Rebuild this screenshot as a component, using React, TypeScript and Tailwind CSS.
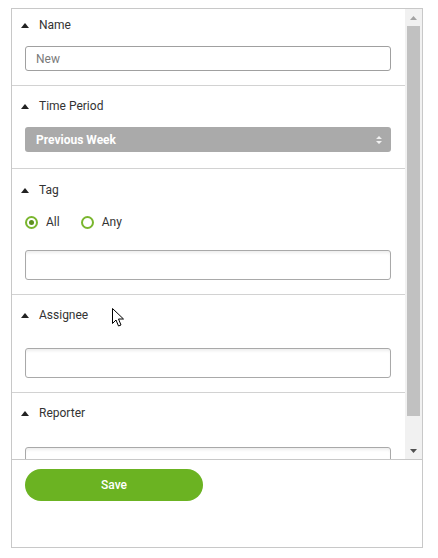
import type { ReactNode } from "react";

function Caret() {
    return (
        <svg width="8" height="5" viewBox="0 0 8 5" className="mr-[10px] ml-[9px] shrink-0">
            <path d="M0 5 L4 0 L8 5 Z" fill="#222" />
        </svg>
    );
}

function Header({ label }: { label: string }) {
    return (
        <div className="flex items-center h-4 text-[12px] text-[#333]">
            <Caret />
            <span>{label}</span>
        </div>
    );
}

function Section({
    className,
    children,
}: {
    className: string;
    children: ReactNode;
}) {
    return (
        <div className={`border-b border-[#d2d2d2] pr-[14px] ${className}`}>
            {children}
        </div>
    );
}

function TextBox({ className = "" }: { className?: string }) {
    return (
        <div
            className={`ml-[13px] h-[30px] rounded-[3px] border border-[#a9a9a9] bg-white shadow-[inset_0_3px_3px_-1px_rgba(0,0,0,0.07)] ${className}`}
        />
    );
}

function Radio({ label, checked }: { label: string; checked?: boolean }) {
    return (
        <div className="flex items-center gap-[8px]">
            <span className="flex h-[13px] w-[13px] items-center justify-center rounded-full border-2 border-[#7ab62e]">
                {checked && (
                    <span className="h-[5px] w-[5px] rounded-full bg-[#5d8f1f]" />
                )}
            </span>
            <span className="text-[12px] text-[#333]">{label}</span>
        </div>
    );
}

export default function App() {
    return (
        <div
            className="relative h-[558px] w-[438px] bg-white pl-[11px] pt-[8px]"
            style={{ fontFamily: "Roboto, 'Liberation Sans', sans-serif" }}
        >
            <div className="flex h-[540px] w-[412px] flex-col border border-[#c8c8c8]">
                <div className="flex h-[450px] overflow-hidden">
                    <div className="flex-1 overflow-hidden">
                        <Section className="pt-[8px] pb-[14px]">
                            <Header label="Name" />
                            <div className="ml-[13px] mt-[13px] flex h-[25px] items-center rounded-[3px] border border-[#a0a0a0] pl-[10px] text-[12px] text-[#7a7a7a]">
                                New
                            </div>
                        </Section>
                        <Section className="pt-[12px] pb-[16px]">
                            <Header label="Time Period" />
                            <div className="ml-[13px] mt-[13px] flex h-[25px] items-center justify-between rounded-[3px] bg-[#aaaaaa] pl-[11px] pr-[9px] text-[12px] font-bold text-white">
                                <span>Previous Week</span>
                                <svg width="6" height="10" viewBox="0 0 6 10">
                                    <path d="M0 4 L3 1 L6 4 Z M0 6 L3 9 L6 6 Z" fill="#f2f2f2" />
                                </svg>
                            </div>
                        </Section>
                        <Section className="pt-[13px] pb-[14px]">
                            <Header label="Tag" />
                            <div className="ml-[13px] mt-[16px] flex h-4 items-center gap-[21px]">
                                <Radio label="All" checked />
                                <Radio label="Any" />
                            </div>
                            <TextBox className="mt-[20px]" />
                        </Section>
                        <Section className="pt-[12px] pb-[14px]">
                            <Header label="Assignee" />
                            <TextBox className="mt-[25px]" />
                        </Section>
                        <Section className="pt-[12px] pb-[14px]">
                            <Header label="Reporter" />
                            <TextBox className="mt-[26px]" />
                        </Section>
                    </div>
                    <div className="flex w-[17px] shrink-0 flex-col items-center bg-[#f1f1f1]">
                        <div className="flex h-[17px] w-full items-center justify-center">
                            <svg width="7" height="4" viewBox="0 0 7 4">
                                <path d="M0 4 L3.5 0 L7 4 Z" fill="#a3a3a3" />
                            </svg>
                        </div>
                        <div className="h-[390px] w-[13px] bg-[#c1c1c1]" />
                        <div className="flex-1" />
                        <div className="flex h-[17px] w-full items-center justify-center">
                            <svg width="7" height="4" viewBox="0 0 7 4">
                                <path d="M0 0 L7 0 L3.5 4 Z" fill="#505050" />
                            </svg>
                        </div>
                    </div>
                </div>
                <div className="flex-1 border-t border-[#c8c8c8] pl-[13px] pt-[9px]">
                    <button className="flex h-[32px] w-[178px] items-center justify-center rounded-full bg-[#6bb322] text-[12px] font-medium text-white">
                        Save
                    </button>
                </div>
            </div>
            <svg
                className="absolute left-[112px] top-[308px]"
                width="13"
                height="20"
                viewBox="0 0 13 20"
            >
                <path
                    d="M0.5 0.5 L0.5 15.5 L4 12 L6.5 18 L9 17 L6.5 11 L11.5 11 Z"
                    fill="white"
                    stroke="black"
                    strokeWidth="1"
                    strokeLinejoin="round"
                />
            </svg>
        </div>
    );
}
